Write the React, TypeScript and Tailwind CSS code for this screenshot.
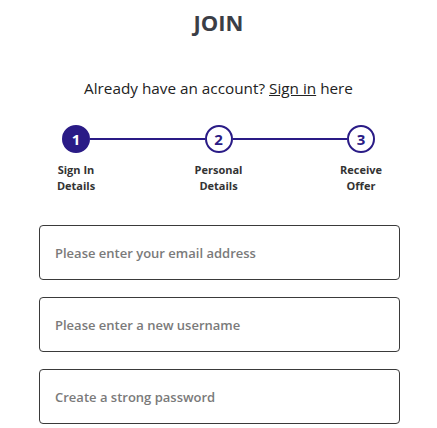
import React from "react";

function Circle({ n, active }: { n: number; active?: boolean }) {
  return (
    <div
      className={
        active
          ? "w-[28px] h-[28px] rounded-full bg-[#2a1b86] border-2 border-[#2a1b86] flex items-center justify-center text-white text-[15px] font-bold leading-none shrink-0"
          : "w-[28px] h-[28px] rounded-full bg-white border-2 border-[#2a1b86] flex items-center justify-center text-[#2a1b86] text-[15px] font-bold leading-none shrink-0"
      }
    >
      {n}
    </div>
  );
}

function Field({ placeholder }: { placeholder: string }) {
  return (
    <input
      type="text"
      placeholder={placeholder}
      className="w-full h-[55px] border border-[#3a3a3a] rounded-[4px] px-[15px] text-[13px] font-semibold text-[#333] placeholder:text-[#7a7a7a] outline-none"
    />
  );
}

export default function App() {
  return (
    <div
      className="w-[437px] h-[428px] bg-white overflow-hidden"
      style={{ fontFamily: '"Open Sans", "Noto Sans", sans-serif' }}
    >
      <h1 className="pt-[7px] text-center text-[22px] leading-[30px] font-bold text-[#3b3e46]">
        JOIN
      </h1>
      <p className="mt-[40px] text-center text-[15.3px] leading-[22px] text-[#222]">
        Already have an account? <span className="underline">Sign in</span> here
      </p>
      <div className="mt-[26px] px-[62px] flex items-center">
        <Circle n={1} active />
        <div className="flex-1 h-[2px] bg-[#2a1b86]" />
        <Circle n={2} />
        <div className="flex-1 h-[2px] bg-[#2a1b86]" />
        <Circle n={3} />
      </div>
      <div className="mt-[9px] px-[48px] flex justify-between text-[11px] leading-[16px] font-bold text-[#333] text-center">
        <div className="w-[56px]">Sign In<br />Details</div>
        <div className="w-[56px]">Personal<br />Details</div>
        <div className="w-[56px]">Receive<br />Offer</div>
      </div>
      <div className="mt-[31px] ml-[39px] mr-[37px] flex flex-col gap-[17px]">
        <Field placeholder="Please enter your email address" />
        <Field placeholder="Please enter a new username" />
        <Field placeholder="Create a strong password" />
      </div>
    </div>
  );
}
